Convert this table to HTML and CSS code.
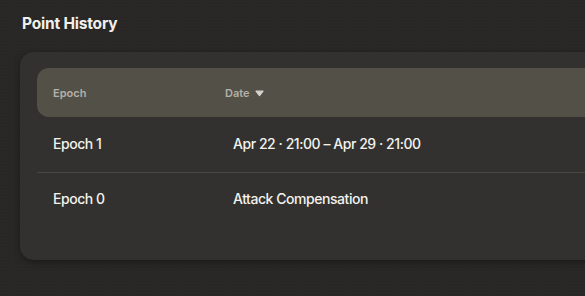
FILE: index.html
```html
<!DOCTYPE html>
<html lang="en">
<head>
    <meta charset="UTF-8">
    <meta name="viewport" content="width=device-width, initial-scale=1.0">
    <title>Point History</title>
    <link rel="stylesheet" href="styles.css">
</head>
<body>
    <section class="history">
        <h2 class="history-title">Point History</h2>

        <div class="card">
            <div class="table-head">
                <div class="col-epoch">Epoch</div>
                <div class="col-date">
                    Date
                    <svg class="sort-icon" width="9" height="7" viewBox="0 0 9 7">
                        <path d="M1 1.2 L8 1.2 L4.5 5.6 Z" fill="currentColor" stroke="currentColor" stroke-width="1.2" stroke-linejoin="round"/>
                    </svg>
                </div>
            </div>

            <div class="table-row">
                <div class="col-epoch">Epoch 1</div>
                <div class="col-date">Apr 22 · 21:00 – Apr 29 · 21:00</div>
            </div>
            <div class="table-row">
                <div class="col-epoch">Epoch 0</div>
                <div class="col-date">Attack Compensation</div>
            </div>
        </div>
    </section>
</body>
</html>
```

FILE: styles.css
```css
/* Global Styles */
body {
    font-family: Inter, "Noto Sans", sans-serif;
    margin: 0;
    padding: 0;
    background-color: #282725;
    background-image: radial-gradient(rgba(255, 255, 255, 0.02) 1px, transparent 1px);
    background-size: 3px 3px;
    color: #f1f0ec;
}

.history {
    padding: 14px 0 0 20px;
    height: 282px;
    overflow: hidden;
}

.history-title {
    font-size: 15.5px;
    font-weight: 700;
    margin: 0 0 0 2px;
    line-height: 20px;
    letter-spacing: -0.2px;
}

/* Card */
.card {
    margin-top: 18px;
    margin-right: -60px;
    padding: 16px 0 32px 17px;
    background-color: #32312f;
    border-radius: 14px;
    box-shadow: 0 2px 6px rgba(0, 0, 0, 0.35);
}

.table-head {
    display: flex;
    align-items: center;
    height: 49px;
    padding-left: 16px;
    background-color: #535048;
    border-radius: 12px 0 0 12px;
    font-size: 11px;
    font-weight: 600;
    color: #b3b0a8;
}

.table-head .col-epoch {
    width: 172px;
}

.table-head .col-date {
    display: flex;
    align-items: center;
    gap: 5px;
}

.sort-icon {
    color: #d6d4ce;
    margin-top: 1px;
}

.table-row {
    display: flex;
    align-items: center;
    height: 52px;
    padding: 0 0 3px 16px;
    font-size: 14px;
    font-weight: 500;
    letter-spacing: -0.45px;
    color: #f3f2ee;
}

.table-row + .table-row {
    height: 50px;
    padding-bottom: 5px;
    border-top: 1px solid #4a4843;
}

.table-row .col-epoch {
    width: 180px;
}
```
